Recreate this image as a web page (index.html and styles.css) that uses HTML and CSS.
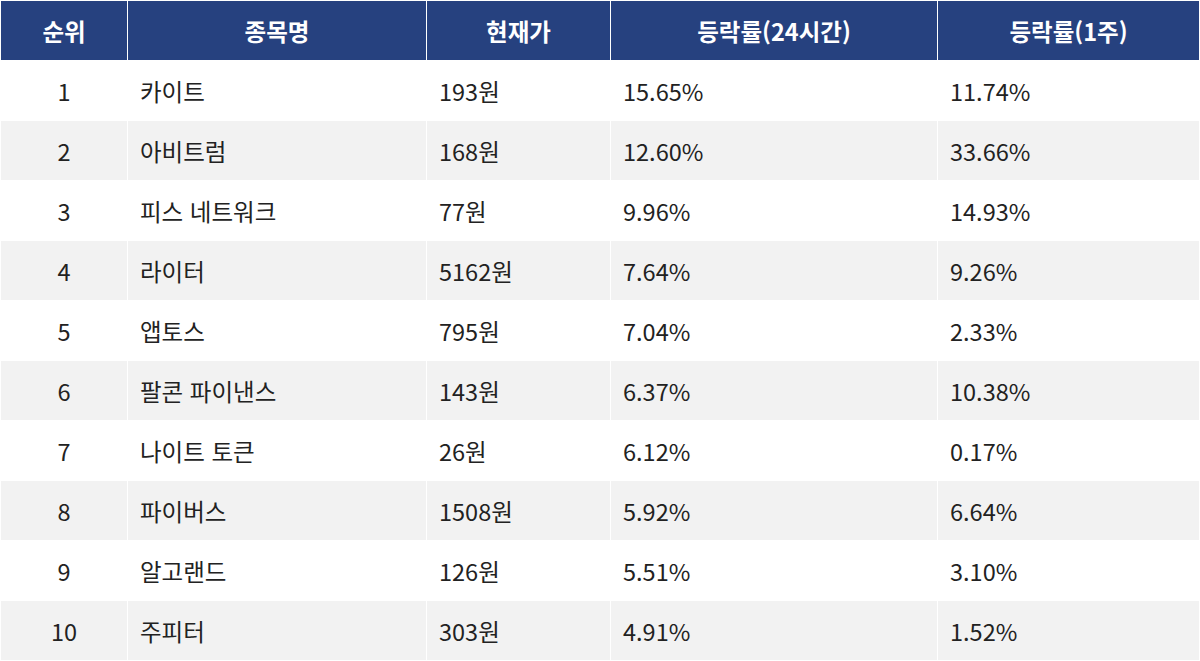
FILE: index.html
```html
<!DOCTYPE html>
<html lang="ko">
<head>
<meta charset="utf-8">
<link rel="stylesheet" href="styles.css">
</head>
<body>
<table class="rank">
  <colgroup>
    <col class="c1"><col class="c2"><col class="c3"><col class="c4"><col class="c5">
  </colgroup>
  <thead>
    <tr><th>순위</th><th>종목명</th><th>현재가</th><th>등락률(24시간)</th><th>등락률(1주)</th></tr>
  </thead>
  <tbody>
    <tr><td class="num">1</td><td>카이트</td><td>193원</td><td>15.65%</td><td>11.74%</td></tr>
    <tr><td class="num">2</td><td>아비트럼</td><td>168원</td><td>12.60%</td><td>33.66%</td></tr>
    <tr><td class="num">3</td><td>피스 네트워크</td><td>77원</td><td>9.96%</td><td>14.93%</td></tr>
    <tr><td class="num">4</td><td>라이터</td><td>5162원</td><td>7.64%</td><td>9.26%</td></tr>
    <tr><td class="num">5</td><td>앱토스</td><td>795원</td><td>7.04%</td><td>2.33%</td></tr>
    <tr><td class="num">6</td><td>팔콘 파이낸스</td><td>143원</td><td>6.37%</td><td>10.38%</td></tr>
    <tr><td class="num">7</td><td>나이트 토큰</td><td>26원</td><td>6.12%</td><td>0.17%</td></tr>
    <tr><td class="num">8</td><td>파이버스</td><td>1508원</td><td>5.92%</td><td>6.64%</td></tr>
    <tr><td class="num">9</td><td>알고랜드</td><td>126원</td><td>5.51%</td><td>3.10%</td></tr>
    <tr><td class="num">10</td><td>주피터</td><td>303원</td><td>4.91%</td><td>1.52%</td></tr>
  </tbody>
</table>
</body>
</html>
```
FILE: styles.css
```css
html, body {
  margin: 0;
  padding: 0;
  background: #ffffff;
}
body {
  font-family: "Noto Sans CJK KR", "Noto Sans", sans-serif;
}
.rank {
  width: 1200px;
  border-collapse: separate;
  border-spacing: 1px;
  table-layout: fixed;
  background: #ffffff;
}
.c1 { width: 126px; }
.c2 { width: 298px; }
.c3 { width: 183px; }
.c4 { width: 326px; }
.c5 { width: 261px; }
.rank th, .rank td {
  height: 59px;
  padding: 0 12px;
  box-sizing: border-box;
  white-space: nowrap;
}
.rank th {
  background: #26417f;
  color: #ffffff;
  font-size: 23.5px;
  font-weight: 700;
  text-align: center;
}
.rank td {
  font-size: 23.5px;
  font-weight: 400;
  color: #222222;
  text-align: left;
  background: #ffffff;
}
.rank tbody tr:nth-child(even) td {
  background: #f2f2f2;
}
.rank td.num {
  text-align: center;
}
```
